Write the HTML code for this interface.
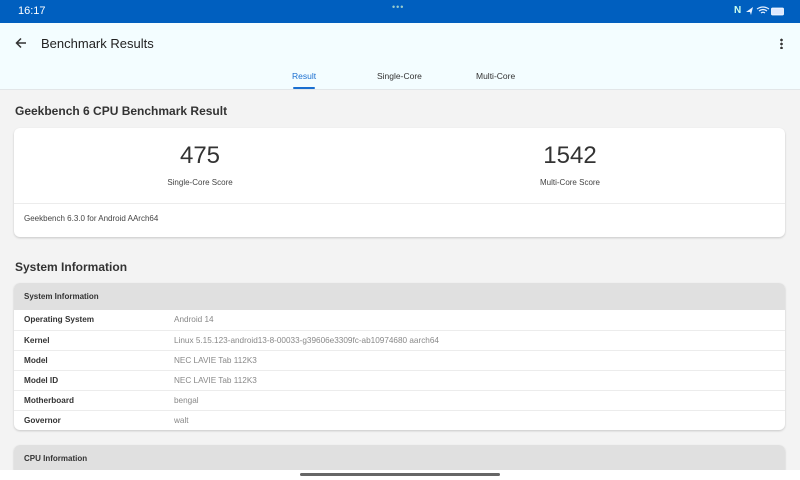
<!DOCTYPE html>
<html><head><meta charset="utf-8"><style>
*{margin:0;padding:0;box-sizing:border-box}
html{width:800px;height:480px;overflow:hidden}
body{width:800px;height:480px;overflow:hidden;background:#f3f3f3;font-family:"Liberation Sans",sans-serif;position:relative;color:#222}
.abs{position:absolute}
.sb{left:0;top:0;width:800px;height:23px;background:#005fbf;color:#fff;font-size:11px}
.hdr{left:0;top:23px;width:800px;height:67px;background:#f3fdff;border-bottom:1px solid #e2e6e8}
.card{background:#fff;border-radius:6px;box-shadow:0 1px 2px rgba(0,0,0,.18);left:14px;width:771px;overflow:hidden}
.row{height:20px;border-top:1px solid #ececec;font-size:8.2px;line-height:19px;position:relative}
.row b{position:absolute;left:10px;font-weight:bold;color:#333}
.row span{position:absolute;left:160px;color:#888}
.ch{height:27px;background:#e0e0e0;font-size:8px;font-weight:bold;line-height:27px;padding-left:10px;color:#333}
</style></head><body>
<div class="abs sb"><span class="abs" style="left:18px;top:5px">16:17</span><span class="abs" style="left:392px;top:2px;font-size:9px;letter-spacing:1px;color:#9cc">•••</span>
<span class="abs" style="left:734px;top:5px;font-size:10px;font-weight:bold;color:#cfe">N</span>
<svg class="abs" style="left:745px;top:6px" width="40" height="11"><path d="M1 6 L8 1 L6 9 L5 6Z" fill="#e6f0ff"/><path d="M12 3 Q18 -1 24 3 M14 5 Q18 2 22 5 M16 7 Q18 5.5 20 7" stroke="#e6f0ff" fill="none" stroke-width="1.2"/><rect x="26.5" y="2" width="12" height="7" rx="1" fill="#dde8ff" stroke="#fff" stroke-width=".8"/></svg></div>
<div class="abs hdr">
<svg class="abs" style="left:15px;top:14px" width="12" height="12"><path d="M11 6H2M6 1.5L1.5 6L6 10.5" stroke="#333" stroke-width="1.5" fill="none"/></svg>
<div class="abs" style="left:41px;top:13px;font-size:13px;color:#222">Benchmark Results</div>
<div class="abs" style="left:780px;top:15px;width:3px;height:11px;background:radial-gradient(circle,#333 1.2px,transparent 1.5px) 0 0/3px 4px"></div>
<div class="abs" style="left:292px;top:48px;font-size:8.5px;color:#1a6fd0">Result</div>
<div class="abs" style="left:293px;top:64px;width:22px;height:2px;background:#1a6fd0;border-radius:1px"></div>
<div class="abs" style="left:377px;top:48px;font-size:8.5px;color:#333">Single-Core</div>
<div class="abs" style="left:476px;top:48px;font-size:8.5px;color:#333">Multi-Core</div>
</div>
<div class="abs" style="left:15px;top:104px;font-size:12px;font-weight:bold;color:#333">Geekbench 6 CPU Benchmark Result</div>
<div class="abs card" style="top:128px;height:109px">
<div class="abs" style="left:86px;width:200px;top:14px;text-align:center;font-size:24px;color:#333">475</div>
<div class="abs" style="left:86px;width:200px;top:50px;text-align:center;font-size:8px;color:#444">Single-Core Score</div>
<div class="abs" style="left:456px;width:200px;top:14px;text-align:center;font-size:24px;color:#333">1542</div>
<div class="abs" style="left:456px;width:200px;top:50px;text-align:center;font-size:8px;color:#444">Multi-Core Score</div>
<div class="abs" style="left:0;top:75px;width:771px;border-top:1px solid #ececec"></div>
<div class="abs" style="left:10px;top:86px;font-size:8px;color:#444">Geekbench 6.3.0 for Android AArch64</div>
</div>
<div class="abs" style="left:15px;top:260px;font-size:12px;font-weight:bold;color:#333">System Information</div>
<div class="abs card" style="top:283px;height:147px">
<div class="ch">System Information</div>
<div class="row" style="border-top:none"><b>Operating System</b><span>Android 14</span></div>
<div class="row"><b>Kernel</b><span>Linux 5.15.123-android13-8-00033-g39606e3309fc-ab10974680 aarch64</span></div>
<div class="row"><b>Model</b><span>NEC LAVIE Tab 112K3</span></div>
<div class="row"><b>Model ID</b><span>NEC LAVIE Tab 112K3</span></div>
<div class="row"><b>Motherboard</b><span>bengal</span></div>
<div class="row"><b>Governor</b><span>walt</span></div>
</div>
<div class="abs card" style="top:445px;height:25px;border-radius:6px 6px 0 0"><div class="ch">CPU Information</div></div>
<div class="abs" style="left:0;top:470px;width:800px;height:10px;background:#fff"></div>
<div class="abs" style="left:300px;top:473px;width:200px;height:3px;background:#666;border-radius:2px"></div>
</body></html>
